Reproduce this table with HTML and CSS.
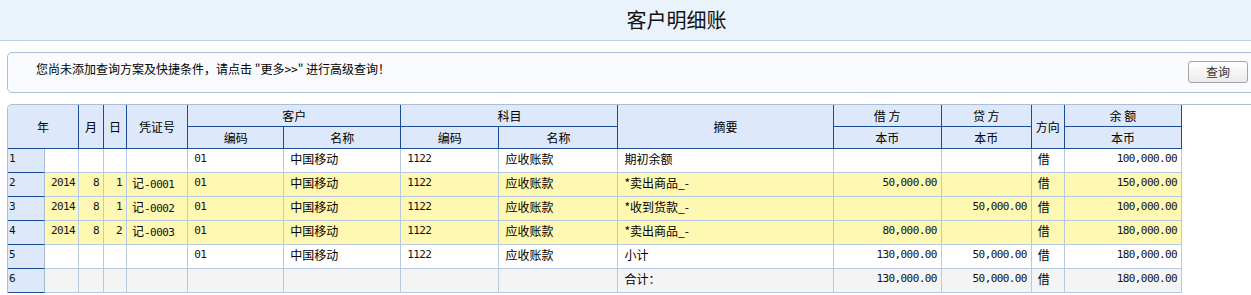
FILE: index.html
```html
<!DOCTYPE html>
<html lang="zh-CN">
<head>
<meta charset="utf-8">
<title>客户明细账</title>
<link rel="stylesheet" href="styles.css">
</head>
<body>
<header class="title-bar"><h1 class="title">客户明细账</h1></header>
<section class="query-box">
  <p class="query-tip">您尚未添加查询方案及快捷条件，请点击 "更多&gt;&gt;" 进行高级查询！</p>
  <button class="query-btn" type="button">查询</button>
</section>
<section class="grid-wrap">
  <table class="ledger">
    <colgroup>
      <col style="width:37px"><col style="width:34px"><col style="width:25px"><col style="width:23px">
      <col style="width:61px"><col style="width:96px"><col style="width:117px"><col style="width:98px">
      <col style="width:119px"><col style="width:215px"><col style="width:108px"><col style="width:90px">
      <col style="width:33px"><col style="width:117px">
    </colgroup>
    <thead>
      <tr class="h">
        <th colspan="2" rowspan="2">年</th>
        <th rowspan="2">月</th>
        <th rowspan="2">日</th>
        <th rowspan="2">凭证号</th>
        <th colspan="2">客户</th>
        <th colspan="2">科目</th>
        <th rowspan="2">摘要</th>
        <th>借 方</th>
        <th>贷 方</th>
        <th rowspan="2">方向</th>
        <th>余 额</th>
      </tr>
      <tr class="h">
        <th>编码</th><th>名称</th><th>编码</th><th>名称</th><th>本币</th><th>本币</th><th>本币</th>
      </tr>
    </thead>
    <tbody>
      <tr>
        <td class="rn n">1</td><td></td><td></td><td></td><td></td>
        <td class="n">01</td><td>中国移动</td><td class="n">1122</td><td>应收账款</td><td>期初余额</td>
        <td></td><td></td><td>借</td><td class="n r">100,000.00</td>
      </tr>
      <tr class="y">
        <td class="rn n">2</td><td class="n r">2014</td><td class="n r">8</td><td class="n r">1</td><td class="v">记<span class="n">-0001</span></td>
        <td class="n">01</td><td>中国移动</td><td class="n">1122</td><td>应收账款</td><td>*卖出商品_-</td>
        <td class="n r">50,000.00</td><td></td><td>借</td><td class="n r">150,000.00</td>
      </tr>
      <tr class="y">
        <td class="rn n">3</td><td class="n r">2014</td><td class="n r">8</td><td class="n r">1</td><td class="v">记<span class="n">-0002</span></td>
        <td class="n">01</td><td>中国移动</td><td class="n">1122</td><td>应收账款</td><td>*收到货款_-</td>
        <td></td><td class="n r">50,000.00</td><td>借</td><td class="n r">100,000.00</td>
      </tr>
      <tr class="y">
        <td class="rn n">4</td><td class="n r">2014</td><td class="n r">8</td><td class="n r">2</td><td class="v">记<span class="n">-0003</span></td>
        <td class="n">01</td><td>中国移动</td><td class="n">1122</td><td>应收账款</td><td>*卖出商品_-</td>
        <td class="n r">80,000.00</td><td></td><td>借</td><td class="n r">180,000.00</td>
      </tr>
      <tr>
        <td class="rn n">5</td><td></td><td></td><td></td><td></td>
        <td class="n">01</td><td>中国移动</td><td class="n">1122</td><td>应收账款</td><td>小计</td>
        <td class="n r">130,000.00</td><td class="n r">50,000.00</td><td>借</td><td class="n r">180,000.00</td>
      </tr>
      <tr class="g">
        <td class="rn n">6</td><td></td><td></td><td></td><td></td>
        <td></td><td></td><td></td><td></td><td>合计：</td>
        <td class="n r">130,000.00</td><td class="n r">50,000.00</td><td>借</td><td class="n r">180,000.00</td>
      </tr>
    </tbody>
  </table>
</section>
</body>
</html>
```

FILE: styles.css
```css
html, body {
  margin: 0;
  padding: 0;
  background: #ffffff;
  overflow: hidden;
}
body {
  font-family: "Noto Sans CJK SC", "Liberation Sans", sans-serif;
  font-size: 12px;
  color: #000;
}
.title-bar {
  height: 40px;
  background: #eaf2fc;
  border-bottom: 1px solid #c3d2e4;
  display: flex;
  align-items: center;
  justify-content: center;
  padding-left: 102px;
}
.title {
  margin: 0;
  font-size: 20px;
  font-weight: normal;
  line-height: 24px;
  color: #111;
}
.query-box {
  margin: 11px -20px 0 7px;
  border: 1px solid #a7bfd8;
  border-radius: 5px;
  background: #f9fbfe;
  display: flex;
  align-items: flex-start;
  justify-content: space-between;
  padding: 8px 22px 0 28px;
  box-sizing: content-box;
  height: 31px;
}
.query-tip {
  margin: 1px 0 0 0;
  line-height: 14px;
  font-size: 12px;
}
.query-btn {
  width: 60px;
  height: 22px;
  margin: 0;
  padding: 0;
  border: 1px solid #a4a4a4;
  border-radius: 3px;
  background: linear-gradient(#ffffff, #ebebeb);
  font-family: "Noto Sans CJK SC", sans-serif;
  font-size: 12px;
  color: #333;
  line-height: 20px;
}
.grid-wrap {
  margin: 11px -20px 0 7px;
  border-top: 1px solid #a7bfd8;
  border-left: 1px solid #a7bfd8;
  border-top-left-radius: 5px;
  overflow: hidden;
}
.ledger {
  table-layout: fixed;
  border-collapse: separate;
  border-spacing: 0;
  width: 1174px;
}
.ledger th {
  background: #dde9fa;
  border-right: 1px solid #1d4c96;
  border-bottom: 1px solid #1d4c96;
  font-weight: normal;
  font-size: 12px;
  text-align: center;
  vertical-align: middle;
  padding: 0;
  line-height: 14px;
}
.ledger tr.h {
  height: 22px;
}
.ledger tbody tr {
  height: 24px;
}
.ledger td {
  border-right: 1px solid #b7c9e4;
  border-bottom: 1px solid #b7c9e4;
  vertical-align: top;
  padding: 3px 4px 0 6px;
  line-height: 14px;
  white-space: nowrap;
  overflow: hidden;
  background: #ffffff;
}
.ledger td.rn {
  background: #dde9fa;
  border-bottom: 1px solid #1d4c96;
  border-right: 1px solid #a9bcd6;
  padding-left: 1px;
}
.ledger tr.y td {
  background: #fff8b2;
}
.ledger tr.g td {
  background: #f4f4f4;
}
.ledger tr td.rn {
  background: #dde9fa;
}
.ledger td.r {
  text-align: right;
  padding-right: 4px;
}
.ledger td.v {
  padding-left: 5px;
}
.n {
  font-family: "DejaVu Sans Mono", monospace;
  font-size: 11px;
  letter-spacing: -0.6px;
  color: #111;
}
```
